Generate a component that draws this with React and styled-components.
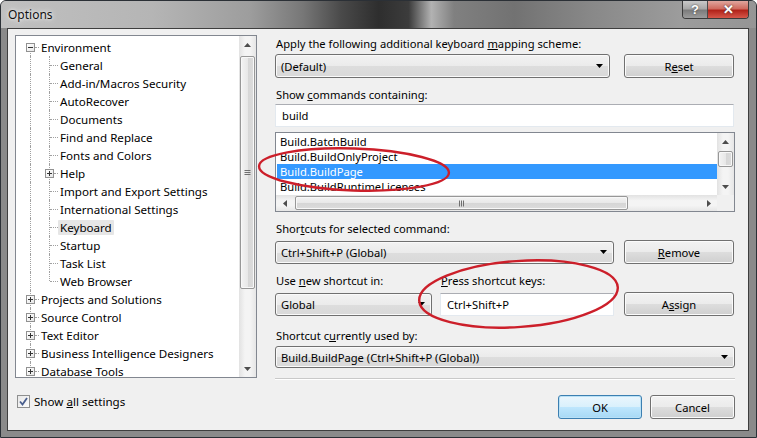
import React from "react";
import styled, { createGlobalStyle } from "styled-components";

const Global = createGlobalStyle`
  html, body { margin: 0; padding: 0; background: #fff; }
  body { font-family: "Segoe UI", "Noto Sans", "Open Sans", sans-serif; font-size: 11.2px; color: #000; }
  * { box-sizing: border-box; }
`;

const Window = styled.div`
  position: relative;
  width: 757px;
  height: 438px;
  display: flex;
  flex-direction: column;
  overflow: hidden;
  border-radius: 6px 6px 0 0;
  background-color: #8a8a8a;
  border: 1px solid #2b3036;
`;

const TitleBar = styled.div`
  flex: none;
  height: 27px;
  display: flex;
  align-items: flex-start;
  justify-content: space-between;
  padding-left: 7px;
  background-color: #7a7a7a;
  background-image: linear-gradient(90deg, #c0c0c0 0%, #b5b5b5 20%, #9d9d9d 33%, #777777 40%, #4a4a4a 45%, #2e2e2e 50%, #3c3c3c 54%, #b2b2b2 57%, #808080 60%, #727272 68%, #888888 78%, #9c9c9c 90%, #959595 100%);
`;

const Title = styled.span`
  margin-top: 5px;
  font-size: 12px;
  color: #111;
  text-shadow: 0 0 6px rgba(255, 255, 255, 0.9), 0 0 3px rgba(255, 255, 255, 0.8);
`;

const CaptionGroup = styled.div`
  display: flex;
  margin-right: 7px;
  height: 18px;
  border: 1px solid #3a3a3a;
  border-top: none;
  border-radius: 0 0 4px 4px;
  overflow: hidden;
`;

const CaptionButton = styled.div`
  width: ${(p) => p.$w}px;
  height: 100%;
  display: flex;
  align-items: center;
  justify-content: center;
  font-family: "Liberation Sans", Arial, sans-serif;
  font-weight: bold;
  font-size: 13px;
  color: #fff;
  text-shadow: 0 0 2px #333;
  background: ${(p) =>
    p.$close
      ? "linear-gradient(180deg, #e0a69e 0%, #cf6b5f 45%, #b2231a 55%, #d6574a 100%)"
      : "linear-gradient(180deg, #c9c9c9 0%, #a8a8a8 45%, #7c7c7c 55%, #9c9c9c 100%)"};
  & + & { border-left: 1px solid #4a4a4a; }
`;

const ClientFrame = styled.div`
  flex: 1;
  margin: 0 7px 6px 6px;
  border: 1px solid #3e3e3e;
  background: #f0f0f0;
  display: grid;
  grid-template-columns: 242px 462px;
  column-gap: 18px;
  padding: 6px 0 0 7px;
`;

const LeftCol = styled.div`
  display: flex;
  flex-direction: column;
`;

const TreeBox = styled.div`
  width: 242px;
  height: 343px;
  border: 1px solid #828790;
  background: #fff;
  display: flex;
`;

const TreeList = styled.div`
  flex: 1;
  padding-top: 2px;
  overflow: hidden;
`;

const TreeRow = styled.div`
  display: flex;
  height: 18px;
  padding-left: 5px;
  align-items: stretch;
`;

const Cell = styled.span`
  position: relative;
  width: 19px;
  flex: none;
  &::before {
    content: "";
    position: absolute;
    left: 9px;
    top: ${(p) => (p.$from === "mid" ? "9px" : "0")};
    bottom: ${(p) => (p.$to === "mid" ? "9px" : "0")};
    border-left: 1px dotted #a0a0a0;
    display: ${(p) => (p.$v ? "block" : "none")};
  }
  &::after {
    content: "";
    position: absolute;
    left: ${(p) => (p.$exp ? "14px" : "10px")};
    right: 1px;
    top: 9px;
    border-top: 1px dotted #a0a0a0;
    display: ${(p) => (p.$h ? "block" : "none")};
  }
`;

const Expander = styled.span`
  position: absolute;
  left: 5px;
  top: 5px;
  width: 9px;
  height: 9px;
  border: 1px solid #919191;
  background: linear-gradient(135deg, #ffffff 0%, #e6e6e6 100%);
  z-index: 1;
  &::before {
    content: "";
    position: absolute;
    left: 1px;
    right: 1px;
    top: 3px;
    border-top: 1px solid #333;
  }
  &::after {
    content: "";
    position: absolute;
    top: 1px;
    bottom: 1px;
    left: 3px;
    border-left: 1px solid #333;
    display: ${(p) => (p.$open ? "none" : "block")};
  }
`;

const TreeLabel = styled.span`
  align-self: center;
  margin-left: -1px;
  padding: 0 2px;
  font-size: 11.6px;
  line-height: 15px;
  white-space: nowrap;
  background: ${(p) => (p.$sel ? "#e6e6e6" : "transparent")};
  border-radius: 1px;
`;

const VScroll = styled.div`
  width: 17px;
  flex: none;
  display: flex;
  flex-direction: column;
  background: linear-gradient(90deg, #e2e2e2 0%, #f4f4f4 35%, #f4f4f4 65%, #e6e6e6 100%);
`;

const HScroll = styled.div`
  height: 16px;
  display: flex;
  background: linear-gradient(180deg, #e2e2e2 0%, #f4f4f4 35%, #f4f4f4 65%, #e6e6e6 100%);
`;

const ArrowBox = styled.div`
  flex: none;
  width: 17px;
  height: 17px;
  display: flex;
  align-items: center;
  justify-content: center;
  align-self: center;
`;

const Gap = styled.div`
  flex: none;
  ${(p) => (p.$h ? `width: ${p.$h}px;` : "")}
  ${(p) => (p.$v ? `height: ${p.$v}px;` : "")}
`;

const Track = styled.div`
  flex: 1;
`;

const Thumb = styled.div`
  flex: none;
  display: flex;
  align-items: center;
  justify-content: center;
  border: 1px solid #979797;
  border-radius: 2px;
  box-shadow: inset 0 0 0 1px #f8f8f8;
  ${(p) =>
    p.$horiz
      ? `width: ${p.$len}px; margin: 1px 0; background: linear-gradient(180deg, #f3f3f3 0%, #e8e8e8 50%, #d6d6d6 51%, #dcdcdc 100%);`
      : `height: ${p.$len}px; margin: 0 1px; background: linear-gradient(90deg, #f3f3f3 0%, #e8e8e8 50%, #d6d6d6 51%, #dcdcdc 100%);`}
`;

const Arrow = ({ dir }) => {
  const pts = {
    up: "0,4 7,4 3.5,0",
    down: "0,0 7,0 3.5,4",
    left: "4,0 4,7 0,3.5",
    right: "0,0 0,7 4,3.5",
  }[dir];
  const vert = dir === "up" || dir === "down";
  return (
    <svg width={vert ? 7 : 4} height={vert ? 4 : 7} viewBox={vert ? "0 0 7 4" : "0 0 4 7"}>
      <polygon points={pts} fill="#4d4d4d" />
    </svg>
  );
};

const Grip = ({ horiz }) => (
  <svg width={7} height={7} viewBox="0 0 7 7">
    {[1, 3, 5].map((k) =>
      horiz ? (
        <line key={k} x1={k + 0.5} y1={0.5} x2={k + 0.5} y2={6.5} stroke="#6f6f6f" strokeWidth="1" />
      ) : (
        <line key={k} x1={0.5} y1={k + 0.5} x2={6.5} y2={k + 0.5} stroke="#6f6f6f" strokeWidth="1" />
      )
    )}
  </svg>
);

const CheckRow = styled.label`
  display: flex;
  align-items: center;
  gap: 4px;
  margin: 17px 0 0 2px;
  height: 13px;
  font-size: 11.6px;
`;

const CheckBox = styled.span`
  width: 13px;
  height: 13px;
  border: 1px solid #8e8f8f;
  background: linear-gradient(135deg, #e8e8e8 0%, #fcfcfc 100%);
  display: flex;
  align-items: center;
  justify-content: center;
`;

const RightCol = styled.div`
  display: flex;
  flex-direction: column;
  padding-right: 2px;
`;

const Label = styled.div`
  line-height: 16px;
  margin-top: ${(p) => p.$mt || 0}px;
  margin-left: ${(p) => p.$ml ?? 1}px;
  width: ${(p) => (p.$w ? p.$w + "px" : "auto")};
  white-space: nowrap;
`;

const U = styled.span`
  text-decoration: underline;
`;

const Row = styled.div`
  display: flex;
  align-items: center;
  margin-top: ${(p) => p.$mt || 0}px;
`;

const Combo = styled.div`
  width: ${(p) => (p.$w ? p.$w + "px" : "100%")};
  height: ${(p) => p.$hgt || 23}px;
  flex: none;
  border: 1px solid #707070;
  border-radius: 3px;
  background: linear-gradient(180deg, #f2f2f2 0%, #ebebeb 50%, #dddddd 51%, #d9d9d9 100%);
  box-shadow: inset 0 0 0 1px #fafafa;
  display: flex;
  align-items: center;
  justify-content: space-between;
  padding: 0 6px 0 5px;
  white-space: nowrap;
`;

const Button = styled.div`
  width: ${(p) => p.$w}px;
  height: ${(p) => p.$hgt || 24}px;
  flex: none;
  margin-left: ${(p) => p.$ml || 0}px;
  border: 1px solid ${(p) => (p.$default ? "#3c7fb1" : "#707070")};
  border-radius: 3px;
  background: ${(p) =>
    p.$default
      ? "linear-gradient(180deg, #eaf6fd 0%, #d9f0fc 50%, #bee6fd 51%, #a7d9f5 100%)"
      : "linear-gradient(180deg, #f2f2f2 0%, #ebebeb 50%, #dddddd 51%, #cfcfcf 100%)"};
  box-shadow: inset 0 0 0 1px ${(p) => (p.$default ? "#b9e1f6" : "#fbfbfb")};
  display: flex;
  align-items: center;
  justify-content: center;
`;

const TextBox = styled.div`
  width: ${(p) => (p.$w ? p.$w + "px" : "100%")};
  height: ${(p) => p.$hgt || 23}px;
  flex: none;
  margin-left: ${(p) => p.$ml || 0}px;
  border: 1px solid #e3e9ef;
  border-top-color: #abadb3;
  background: #fff;
  display: flex;
  align-items: center;
  padding-left: ${(p) => p.$pl || 5}px;
`;

const ListBox = styled.div`
  margin-top: 5px;
  width: 460px;
  height: 80px;
  border: 1px solid #828790;
  background: #fff;
  display: grid;
  grid-template-columns: 1fr 17px;
  grid-template-rows: 1fr 16px;
`;

const ListItems = styled.div`
  padding-top: 1px;
  overflow: hidden;
`;

const ListItem = styled.div`
  height: 15px;
  line-height: 15px;
  padding-left: 3px;
  margin-left: 1px;
  white-space: nowrap;
  background: ${(p) => (p.$sel ? "#3399ff" : "transparent")};
  color: ${(p) => (p.$sel ? "#fff" : "#000")};
`;

const Corner = styled.div`
  background: #f0f0f0;
`;

const Separator = styled.div`
  margin-top: 10px;
  height: 2px;
  width: 460px;
  border-top: 1px solid #c9c9c9;
  border-bottom: 1px solid #ffffff;
`;

const BottomRow = styled.div`
  display: flex;
  justify-content: flex-end;
  gap: 8px;
  margin-top: 15px;
`;

const Overlay = styled.svg`
  position: absolute;
  left: -1px;
  top: -1px;
  pointer-events: none;
  background: none;
`;

const DropArrow = () => (
  <svg width="7" height="4" viewBox="0 0 7 4">
    <polygon points="0,0 7,0 3.5,4" fill="#000" />
  </svg>
);

const children = [
  "General",
  "Add-in/Macros Security",
  "AutoRecover",
  "Documents",
  "Find and Replace",
  "Fonts and Colors",
  "Help",
  "Import and Export Settings",
  "International Settings",
  "Keyboard",
  "Startup",
  "Task List",
  "Web Browser",
];
const roots = [
  "Projects and Solutions",
  "Source Control",
  "Text Editor",
  "Business Intelligence Designers",
  "Database Tools",
];

export default function App() {
  return (
    <>
      <Global />
      <Window>
        <TitleBar>
          <Title>Options</Title>
          <CaptionGroup>
            <CaptionButton $w={24}>?</CaptionButton>
            <CaptionButton $w={41} $close>
              ✕
            </CaptionButton>
          </CaptionGroup>
        </TitleBar>
        <ClientFrame>
          <LeftCol>
            <TreeBox>
              <TreeList>
                <TreeRow>
                  <Cell $v $from="mid" $h $exp>
                    <Expander $open />
                  </Cell>
                  <TreeLabel>Environment</TreeLabel>
                </TreeRow>
                {children.map((c, i) => {
                  const last = i === children.length - 1;
                  const hasKids = c === "Help";
                  return (
                    <TreeRow key={c}>
                      <Cell $v />
                      <Cell $v $to={last ? "mid" : undefined} $h $exp={hasKids}>
                        {hasKids && <Expander />}
                      </Cell>
                      <TreeLabel $sel={c === "Keyboard"}>{c}</TreeLabel>
                    </TreeRow>
                  );
                })}
                {roots.map((r) => (
                  <TreeRow key={r}>
                    <Cell $v $h $exp>
                      <Expander />
                    </Cell>
                    <TreeLabel>{r}</TreeLabel>
                  </TreeRow>
                ))}
              </TreeList>
              <VScroll>
                <ArrowBox>
                  <Arrow dir="up" />
                </ArrowBox>
                <Gap $v={3} />
                <Thumb $len={233}>
                  <Grip />
                </Thumb>
                <Track />
                <ArrowBox>
                  <Arrow dir="down" />
                </ArrowBox>
              </VScroll>
            </TreeBox>
            <CheckRow>
              <CheckBox>
                <svg width="9" height="9" viewBox="0 0 9 9">
                  <path d="M1 4.5 L3.5 7.5 L8 1" fill="none" stroke="#4a5f8e" strokeWidth="1.8" />
                </svg>
              </CheckBox>
              <span>
                Show <U>a</U>ll settings
              </span>
            </CheckRow>
          </LeftCol>

          <RightCol>
            <Label $mt={1}>
              Apply the following additional keyboard <U>m</U>apping scheme:
            </Label>
            <Row $mt={2}>
              <Combo $w={335} $hgt={24}>
                <span>(Default)</span>
                <DropArrow />
              </Combo>
              <Button $w={110} $ml={14}>
                <span>
                  R<U>e</U>set
                </span>
              </Button>
            </Row>
            <Label $mt={9}>
              Show <U>c</U>ommands containing:
            </Label>
            <Row $mt={1}>
              <TextBox $w={459} $pl={6}>
                build
              </TextBox>
            </Row>
            <ListBox>
              <ListItems>
                <ListItem>Build.BatchBuild</ListItem>
                <ListItem>Build.BuildOnlyProject</ListItem>
                <ListItem $sel>Build.BuildPage</ListItem>
                <ListItem>Build.BuildRuntimeLicenses</ListItem>
              </ListItems>
              <VScroll>
                <ArrowBox>
                  <Arrow dir="up" />
                </ArrowBox>
                <Gap $v={1} />
                <Thumb $len={16} />
                <Track />
                <ArrowBox>
                  <Arrow dir="down" />
                </ArrowBox>
              </VScroll>
              <HScroll>
                <ArrowBox>
                  <Arrow dir="left" />
                </ArrowBox>
                <Gap $h={2} />
                <Thumb $horiz $len={333}>
                  <Grip horiz />
                </Thumb>
                <Track />
                <ArrowBox>
                  <Arrow dir="right" />
                </ArrowBox>
              </HScroll>
              <Corner />
            </ListBox>
            <Label $mt={9}>
              Shor<U>t</U>cuts for selected command:
            </Label>
            <Row $mt={3}>
              <Combo $w={339}>
                <span>Ctrl+Shift+P (Global)</span>
                <DropArrow />
              </Combo>
              <Button $w={110} $ml={10}>
                <span>
                  <U>R</U>emove
                </span>
              </Button>
            </Row>
            <Row $mt={9}>
              <Label $ml={1} $w={165}>
                Use <U>n</U>ew shortcut in:
              </Label>
              <Label $ml={0}>
                <U>P</U>ress shortcut keys:
              </Label>
            </Row>
            <Row $mt={3}>
              <Combo $w={157}>
                <span>Global</span>
                <DropArrow />
              </Combo>
              <TextBox $w={174} $pl={6} $ml={8}>
                Ctrl+Shift+P
              </TextBox>
              <Button $w={110} $ml={10}>
                <span>
                  A<U>s</U>sign
                </span>
              </Button>
            </Row>
            <Label $mt={12}>
              Shortcut c<U>u</U>rrently used by:
            </Label>
            <Row $mt={2}>
              <Combo $w={460} $hgt={22}>
                <span>Build.BuildPage (Ctrl+Shift+P (Global))</span>
                <DropArrow />
              </Combo>
            </Row>
            <Separator />
            <BottomRow>
              <Button $w={84} $hgt={24} $default>
                OK
              </Button>
              <Button $w={85} $hgt={24}>
                Cancel
              </Button>
            </BottomRow>
          </RightCol>
        </ClientFrame>
        <Overlay width="757" height="438" viewBox="0 0 757 438">
          <ellipse
            cx="354"
            cy="169.5"
            rx="95"
            ry="21"
            transform="rotate(2 354 169.5)"
            fill="none"
            stroke="#cc1f2a"
            strokeWidth="2.4"
          />
          <ellipse
            cx="518.5"
            cy="294"
            rx="99.5"
            ry="33"
            transform="rotate(-4 518.5 294)"
            fill="none"
            stroke="#cc1f2a"
            strokeWidth="2.4"
          />
        </Overlay>
      </Window>
    </>
  );
}
